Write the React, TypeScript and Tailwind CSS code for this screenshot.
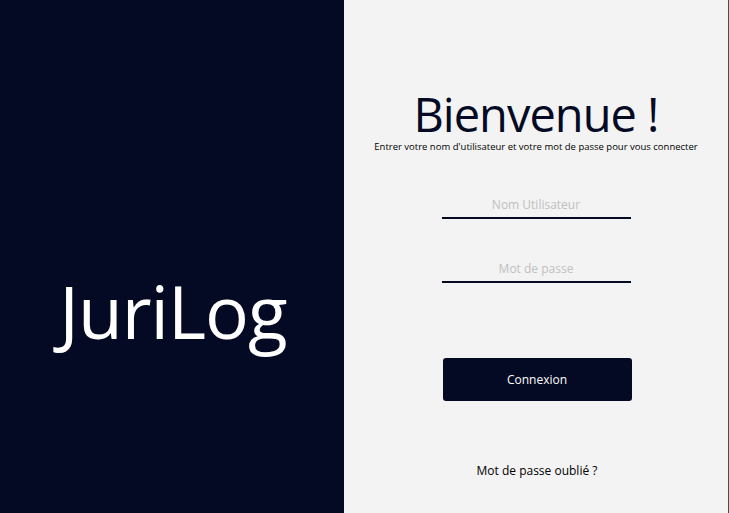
export default function App() {
  return (
    <div className="flex h-[513px] w-full overflow-hidden" style={{ fontFamily: '"Open Sans", "Noto Sans", sans-serif' }}>
      <div className="flex w-[344px] shrink-0 items-start justify-center bg-[#050a24] pt-[256px]">
        <span className="ml-[2px] text-[73px] leading-[110px] tracking-[-1px] text-white">JuriLog</span>
      </div>
      <div className="flex flex-1 flex-col items-center border-r border-[#4b4b4b] bg-[#f3f3f3] pt-[88px]">
        <h1 className="text-[47px] leading-[52px] tracking-[-1px] text-[#050a24]">Bienvenue !</h1>
        <p className="mt-[1px] text-[9.5px] leading-[12px] text-black">Entrer votre nom d'utilisateur et votre mot de passe pour vous connecter</p>
        <div className="mt-[44px] w-[189px] border-b-2 border-[#050a24] pb-[4px] text-center text-[12px] leading-[16px] text-[#c0c0c0]">Nom Utilisateur</div>
        <div className="mt-[42px] w-[189px] border-b-2 border-[#050a24] pb-[4px] text-center text-[12px] leading-[16px] text-[#c0c0c0]">Mot de passe</div>
        <button className="ml-[2px] mt-[75px] h-[43px] w-[189px] rounded-[3px] bg-[#050a24] text-[12px] text-white">Connexion</button>
        <p className="ml-[2px] mt-[62px] text-[12px] leading-[16px] text-black">Mot de passe oublié ?</p>
      </div>
    </div>
  );
}
